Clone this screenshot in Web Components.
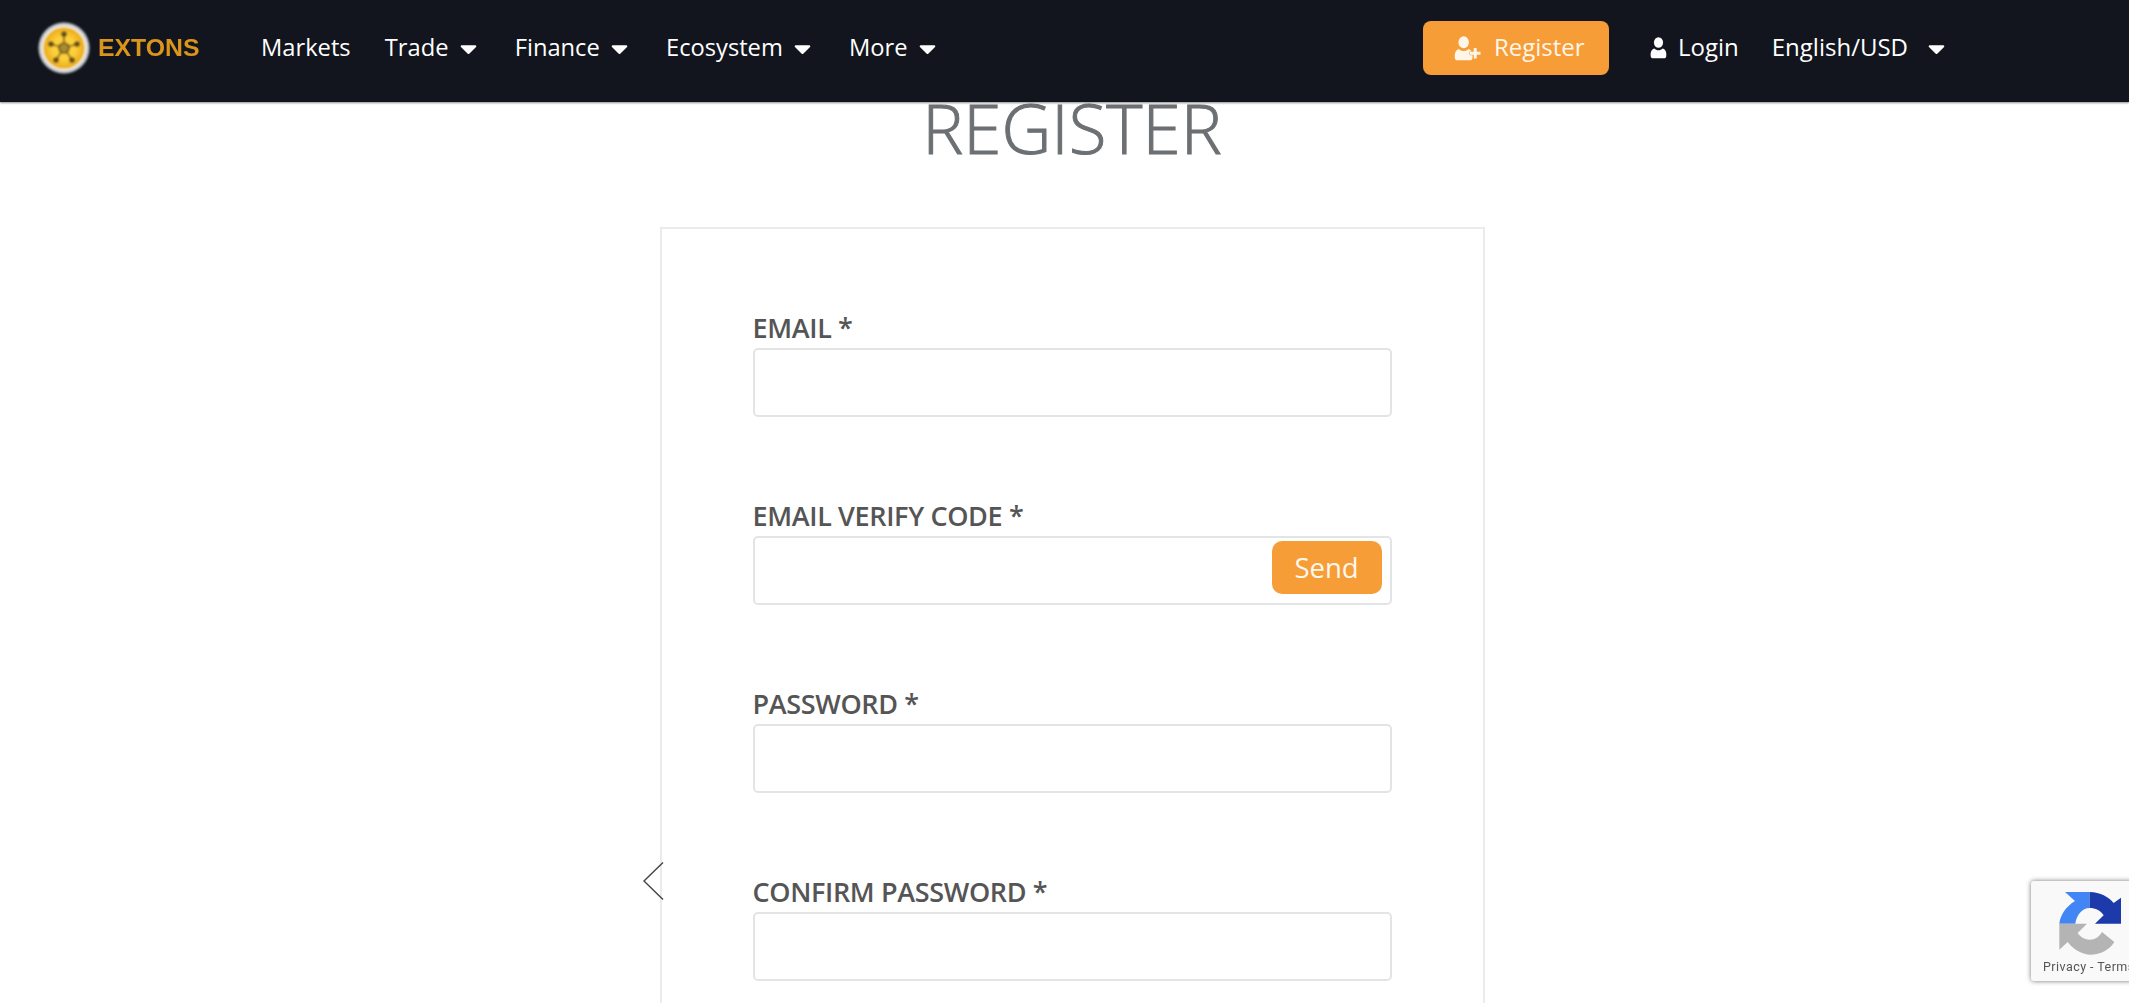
<!DOCTYPE html>
<html>
<head>
<meta charset="utf-8">
<title>Register</title>
<style>
  html, body { margin: 0; height: 1003px; overflow: hidden; background: #fff; }
  body { font-family: "Open Sans", "Liberation Sans", sans-serif; }
</style>
</head>
<body>
<site-header>
  <nav-item>Markets</nav-item>
  <nav-item caret>Trade</nav-item>
  <nav-item caret>Finance</nav-item>
  <nav-item caret>Ecosystem</nav-item>
  <nav-item caret>More</nav-item>
</site-header>
<register-page>
  <form-field label="EMAIL *"></form-field>
  <form-field label="EMAIL VERIFY CODE *" action="Send"></form-field>
  <form-field label="PASSWORD *"></form-field>
  <form-field label="CONFIRM PASSWORD *"></form-field>
</register-page>
<side-arrow></side-arrow>
<recaptcha-badge></recaptcha-badge>

<script>
const CARET = `<svg viewBox="0 0 320 512" width="17" height="27" fill="#fff"><path d="M31.3 192h257.3c17.8 0 26.7 21.5 14.1 34.1L174.1 354.8c-7.8 7.8-20.5 7.8-28.3 0L17.2 226.1C4.6 213.5 13.5 192 31.3 192z"/></svg>`;
// old style user: head and shoulders
const USER = `<ellipse cx="10" cy="6.5" rx="5.4" ry="6.3"/><path d="M1 23.6C.2 19.6 1 14.8 5 13.6c1.4 1.4 3 2.1 5 2.1s3.6-.7 5-2.1c4 1.2 4.8 6 4 10-.3 1-1.4 1.6-2.6 1.6H3.6C2.4 25.2 1.300 24.600 1 23.600z"/>`;

class NavItem extends HTMLElement {
  constructor() {
    super();
    const root = this.attachShadow({ mode: "open" });
    const caret = this.hasAttribute("caret");
    root.innerHTML = `
      <style>
        :host { display: flex; align-items: center; gap: 11px; color: #fff; font-size: 23.7px; white-space: nowrap; ${caret ? "margin-right: 4px;" : ""} }
        .label { padding-bottom: 3px; }
        svg { display: block; }
      </style>
      <span class="label"><slot></slot></span>${caret ? CARET : ""}`;
  }
}
customElements.define("nav-item", NavItem);

class SiteHeader extends HTMLElement {
  constructor() {
    super();
    const root = this.attachShadow({ mode: "open" });
    root.innerHTML = `
      <style>
        :host { display: flex; align-items: center; height: 102px; box-sizing: border-box; padding: 0 0 6px 38px;
          background: #12151d; box-shadow: 0 1px 2px rgba(0,0,0,.45); position: relative; z-index: 2; }
        .logo { display: flex; align-items: center; gap: 8px; width: 223px; flex: none; }
        .logo svg { display: block; filter: blur(.8px); }
        .logo span { font: 700 24.8px "Liberation Sans", sans-serif; color: #d9951c; filter: blur(.7px); }
        nav { display: flex; align-items: center; gap: 34.2px; }
        .right { display: flex; align-items: center; margin-left: auto; margin-right: 184px; color: #fff; font-size: 24px; }
        .right span { padding-bottom: 4px; }
        .register { display: flex; align-items: center; gap: 12px; width: 186px; height: 54px; box-sizing: border-box; padding-left: 31px;
          background: #f79d38; border-radius: 8px; color: #fff6ea; }
        .login { display: flex; align-items: center; gap: 11px; margin-left: 41px; }
        .lang { display: flex; align-items: center; gap: 20px; margin-left: 33px; }
        svg { display: block; }
      </style>
      <div class="logo">
        <svg width="52" height="52" viewBox="0 0 52 52">
          <defs><radialGradient id="g"><stop offset=".55" stop-color="#fdd03a"/><stop offset="1" stop-color="#eba81a"/></radialGradient></defs>
          <circle cx="26" cy="26" r="25.5" fill="#c9c9c9"/>
          <circle cx="26" cy="26" r="22.500" fill="#f2f2f2"/>
          <circle cx="26" cy="26" r="20.500" fill="url(#g)"/>
          <g stroke="#5a4512" stroke-width="1.2" fill="#5a4512">
            <path d="M26 26V12M26 26L13 22M26 26L39 22M26 26L18 38M26 26L34 38" fill="none"/>
            <circle cx="26" cy="12" r="2"/><circle cx="13" cy="22" r="2"/><circle cx="39" cy="22" r="2"/>
            <circle cx="18" cy="38" r="2"/><circle cx="34" cy="38" r="2"/>
            <circle cx="26" cy="26" r="5" fill="#a98a35"/>
          </g>
        </svg>
        <span>EXTONS</span>
      </div>
      <nav><slot></slot></nav>
      <div class="right">
        <div class="register">
          <svg viewBox="0 0 29 26" width="28" height="25" fill="#fff6ea">${USER}
            <path d="M20.500 12.500h3v4h4v3h-4v4h-3v-4h-4v-3h4z" stroke="#f79d38" stroke-width="1" paint-order="stroke"/></svg>
          <span>Register</span>
        </div>
        <div class="login">
          <svg viewBox="0 0 20 26" width="17" height="22" fill="#fff">${USER}</svg>
          <span>Login</span>
        </div>
        <div class="lang"><span>English/USD</span>${CARET}</div>
      </div>`;
  }
}
customElements.define("site-header", SiteHeader);

class FormField extends HTMLElement {
  constructor() {
    super();
    const root = this.attachShadow({ mode: "open" });
    const action = this.getAttribute("action");
    root.innerHTML = `
      <style>
        :host { display: block; }
        label { display: block; font-size: 27px; line-height: 36px; font-weight: 600; color: #555; letter-spacing: -.35px; margin-bottom: 2px; }
        .box { display: flex; align-items: flex-start; height: 69px; box-sizing: border-box; padding: 3px; border: 2px solid #e3e4e6; border-radius: 5px; background: #fff; }
        input { flex: 1; min-width: 0; height: 100%; border: 0; outline: 0; padding: 0 12px; background: transparent; font: inherit; }
        button { flex: none; width: 110px; height: 53px; border: 0; border-radius: 10px; background: #f79d38; color: #fff8ec;
          font: 27.500px "Open Sans", sans-serif; margin-right: 5px; padding: 0; }
      </style>
      <label>${this.getAttribute("label")}</label>
      <div class="box"><input type="text">${action ? `<button type="button">${action}</button>` : ""}</div>`;
  }
}
customElements.define("form-field", FormField);

class RegisterPage extends HTMLElement {
  constructor() {
    super();
    const root = this.attachShadow({ mode: "open" });
    root.innerHTML = `
      <style>
        :host { display: block; padding-left: 15px; text-align: center; }
        h1 { margin: -20px 0 0; font-size: 69px; line-height: 90px; font-weight: 300; color: #6c7073; -webkit-text-stroke: 1px #6c7073; }
        .card { width: 825px; height: 900px; margin: 55px auto 0; box-sizing: border-box; border: 2px solid #ebebeb;
          padding: 81px 91px 0; display: flex; flex-direction: column; gap: 81px; text-align: left; }
      </style>
      <h1>REGISTER</h1>
      <div class="card"><slot></slot></div>`;
  }
}
customElements.define("register-page", RegisterPage);

class SideArrow extends HTMLElement {
  constructor() {
    super();
    this.attachShadow({ mode: "open" }).innerHTML = `
      <style>
        :host { position: fixed; left: 642px; top: 861px; width: 22px; height: 40px; display: block; }
        svg { display: block; }
      </style>
      <svg width="22" height="40" viewBox="0 0 22 40"><path d="M21 1.500 2 20l19 18.500" fill="none" stroke="#444" stroke-width="1.400"/></svg>`;
  }
}
customElements.define("side-arrow", SideArrow);

class RecaptchaBadge extends HTMLElement {
  constructor() {
    super();
    this.attachShadow({ mode: "open" }).innerHTML = `
      <style>
        :host { position: fixed; left: 2031px; top: 881px; width: 256px; height: 100px; display: block; box-sizing: border-box;
          background: #f9f9f9; border-radius: 3px; box-shadow: 0 0 5px rgba(0,0,0,.55); overflow: hidden; }
        svg { position: absolute; left: 0; top: 0; filter: blur(.4px); }
        span { position: absolute; left: 12px; top: 78px; font: 12.500px/16px Roboto, sans-serif; color: #555; white-space: nowrap; letter-spacing: .45px; }
      </style>
      <svg width="98" height="80" viewBox="122 62 294 240">
        <path fill="#4285f4" d="M298 95H224L254 122C225 140 210 165 207 190H255C258 165 275 143 298 143Z"/>
        <path fill="#1c3aa9" d="M298 95C330 95 355 110 370 128L392 112V190H314L340 165C330 150 315 143 298 143Z"/>
        <path fill="#b4b4b4" d="M207 190V268L232 245C255 275 285 283 298 283C332 283 358 268 372 245L335 215C325 232 312 238 298 238C285 238 272 232 262 218L290 190Z"/>
      </svg>
      <span>Privacy - Terms</span>`;
  }
}
customElements.define("recaptcha-badge", RecaptchaBadge);
</script>
</body>
</html>
